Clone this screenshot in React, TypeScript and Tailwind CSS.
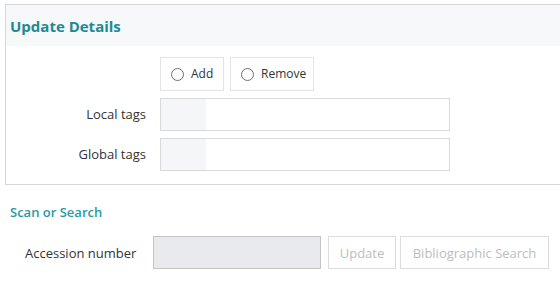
export default function App() {
  return (
    <div className="min-h-[290px] w-[560px] overflow-hidden bg-white pt-[4px] font-['Open_Sans',sans-serif] text-[13px] text-[#333]">
      <section className="ml-[5px] border-y border-l border-[#d6d6d6]">
        <div className="flex h-[41px] items-center bg-[#f7f8fa] pl-[4px] pt-[2px]">
          <h2 className="text-[15px] font-bold text-[#1d8a93]">Update Details</h2>
        </div>
        <div className="flex flex-col gap-[7px] pb-[13px] pt-[11px]">
          <div className="flex">
            <div className="w-[154px] shrink-0" />
            <div className="flex gap-[6px]">
              <RadioBox label="Add" width="w-[64px]" />
              <RadioBox label="Remove" width="w-[84px]" />
            </div>
          </div>
          <TagRow label="Local tags" />
          <TagRow label="Global tags" />
        </div>
      </section>
      <h3 className="mt-[18px] pl-[10px] text-[13px] font-semibold text-[#2a9aa3]">Scan or Search</h3>
      <div className="mt-[13px] flex items-center pl-[25px]">
        <span className="w-[128px] shrink-0 pt-[3px] text-[13px] text-[#333]">Accession number</span>
        <div className="h-[33px] w-[168px] border border-[#c4c4c4] bg-[#e8eaed]" />
        <button className="ml-[7px] h-[33px] w-[68px] border border-[#dcdcdc] bg-white pt-[3px] text-[13px] text-[#bdbdbd]">
          Update
        </button>
        <button className="ml-[4px] h-[33px] w-[149px] border border-[#dcdcdc] bg-white pt-[3px] text-[13px] text-[#bdbdbd]">
          Bibliographic Search
        </button>
      </div>
    </div>
  );
}

function RadioBox({ label, width }: { label: string; width: string }) {
  return (
    <label className={`flex h-[34px] ${width} items-center gap-[7px] border border-[#e3e3e3] pl-[10px] text-[12px] text-[#333]`}>
      <span className="h-[13px] w-[13px] rounded-full border border-[#6f6f6f] bg-white" />
      {label}
    </label>
  );
}

function TagRow({ label }: { label: string }) {
  return (
    <div className="flex items-center">
      <span className="w-[140px] shrink-0 text-right text-[13px] text-[#333]">{label}</span>
      <div className="ml-[14px] flex h-[33px] w-[290px] border border-[#d9d9d9]">
        <div className="w-[45px] bg-[#f5f6f8]" />
      </div>
    </div>
  );
}
